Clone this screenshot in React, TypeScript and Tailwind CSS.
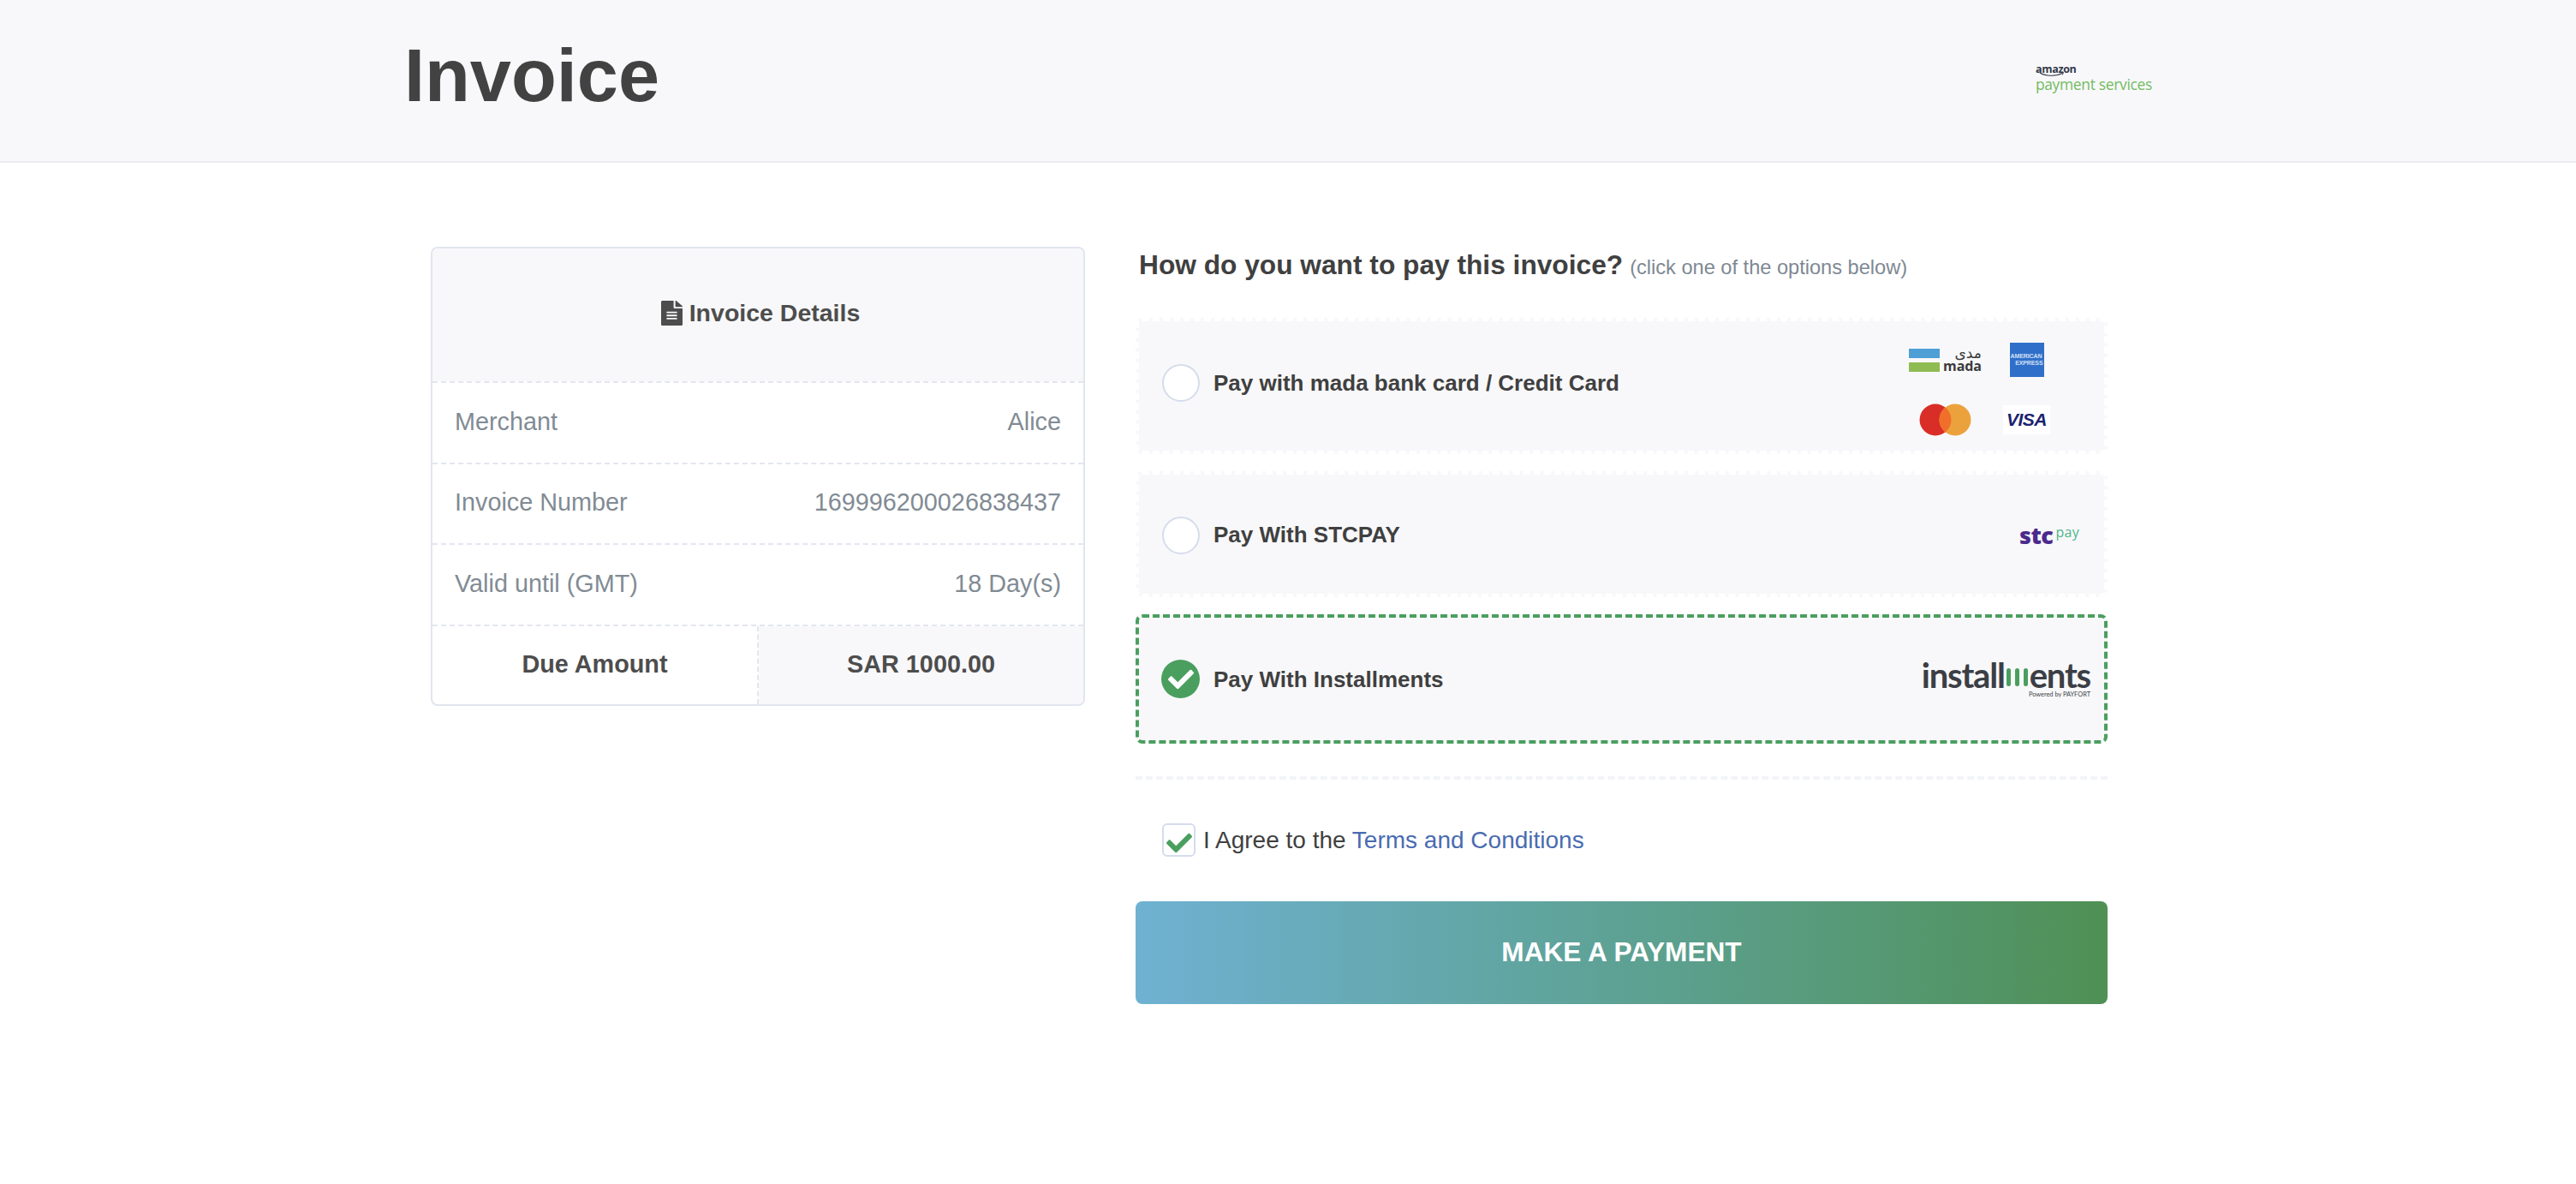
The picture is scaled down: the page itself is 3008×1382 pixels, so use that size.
import { FaFileAlt, FaCheck } from 'react-icons/fa';

const sans = 'font-["Liberation_Sans",Arial,sans-serif]';

function AmazonLogo() {
  return (
    <div className="flex flex-col items-start mb-[6px]">
      <div className="relative h-[14px] w-[42px]">
        <span className='block font-["Open_Sans",sans-serif] font-bold text-[12.5px] leading-[11px] tracking-[-0.3px] text-[#33384a]'>
          amazon
        </span>
        <svg className="absolute left-[4px] top-[9px]" width="30" height="6" viewBox="0 0 30 6" fill="none">
          <path d="M1 1c7 4.2 19 4.4 26 .6" stroke="#33384a" strokeWidth="1.1" strokeLinecap="round" />
          <path d="M25 .6l3.4-.2-1 3" stroke="#33384a" strokeWidth="1" fill="none" />
        </svg>
      </div>
      <span className='font-["Open_Sans",sans-serif] font-normal text-[17.4px] leading-[18px] tracking-[-0.3px] text-[#74bb63] whitespace-nowrap'>
        payment services
      </span>
    </div>
  );
}

function MadaLogo() {
  return (
    <div className="flex items-center gap-[4px]">
      <div className="flex flex-col gap-[5px]">
        <div className="w-[36px] h-[11px] bg-[#4d9fd6]" />
        <div className="w-[36px] h-[11px] bg-[#8fbc52]" />
      </div>
      <div className="flex flex-col items-end">
        <span className='font-["DejaVu_Sans",sans-serif] text-[17px] leading-[15px] text-[#3a3a3a]' dir="rtl">
          مدى
        </span>
        <span className='font-["Open_Sans",sans-serif] font-bold text-[16px] leading-[15px] tracking-[-0.1px] text-[#3a3a3a]'>
          mada
        </span>
      </div>
    </div>
  );
}

function AmexLogo() {
  return (
    <div className={`w-[40px] h-[40px] bg-[#306fc9] flex flex-col justify-center ${sans} font-bold text-[7px] leading-[8px] text-[#cfe0f7] overflow-hidden`}>
      <span className="whitespace-nowrap pl-[1px] tracking-[-0.1px]">AMERICAN</span>
      <span className="whitespace-nowrap text-right pr-[1px] tracking-[-0.1px]">EXPRESS</span>
    </div>
  );
}

function MasterCardLogo() {
  return (
    <svg width="62" height="38" viewBox="0 0 62 38">
      <circle cx="19" cy="19" r="18.5" fill="#d92d27" />
      <circle cx="42" cy="19" r="18.5" fill="#eca23c" />
      <path d="M30.5 4.5a18.5 18.5 0 0 1 0 29a18.5 18.5 0 0 1 0-29z" fill="#f06f2b" />
    </svg>
  );
}

function VisaLogo() {
  return (
    <div className={`w-[55px] h-[34px] bg-white flex items-center justify-center ${sans} italic font-bold text-[21px] tracking-[-0.5px] text-[#1a2270]`}>
      VISA
    </div>
  );
}

function StcLogo() {
  return (
    <div className='flex items-start font-["Open_Sans",sans-serif]'>
      <span className="font-extrabold text-[27px] leading-[24px] tracking-[-0.5px] text-[#4b2a8c]">stc</span>
      <span className="ml-[3px] font-normal text-[16px] leading-[16px] tracking-[0.3px] text-[#4fb58c]">pay</span>
    </div>
  );
}

function InstallmentsLogo() {
  return (
    <div className='flex flex-col items-end font-["Lato",sans-serif] text-[#3b3f45] mt-[2px]'>
      <div className="flex items-end h-[34px]">
        <span className="font-bold text-[40px] leading-[34px] tracking-[-1.2px]">install</span>
        <span className="flex items-end gap-[5px] mx-[2px] mb-[4px]">
          <span className="w-[5px] h-[21px] rounded-full bg-[#4a9f5f]" />
          <span className="w-[5px] h-[21px] rounded-full bg-[#4a9f5f]" />
          <span className="w-[5px] h-[21px] rounded-full bg-[#4a9f5f]" />
        </span>
        <span className="font-bold text-[40px] leading-[34px] tracking-[-1.2px]">ents</span>
      </div>
      <span className="text-[7.4px] leading-[10px] mt-[1px] whitespace-nowrap">Powered by PAYFORT</span>
    </div>
  );
}

function InfoRow({ label, value }: { label: string; value: string }) {
  return (
    <div className="h-[94.5px] flex items-center justify-between px-[26px] pb-[2px] border-t-2 border-dashed border-[#e3e6f1] text-[#818b94] text-[28.8px]">
      <span>{label}</span>
      <span>{value}</span>
    </div>
  );
}

function Radio({ checked }: { checked?: boolean }) {
  if (checked) {
    return (
      <span className="w-[45px] h-[45px] rounded-full bg-[#4a9f5f] flex items-center justify-center text-white shrink-0">
        <FaCheck className="w-[30px] h-[30px]" />
      </span>
    );
  }
  return <span className="w-[44px] h-[44px] rounded-full bg-white border-2 border-[#d5dcec] shrink-0" />;
}

export default function App() {
  return (
    <div className={`min-h-screen bg-white ${sans} text-[#404040]`}>
      <header className="h-[190px] bg-[#f8f8fa] border-b-2 border-[#ececef] pl-[472px] pr-[495px] flex items-center justify-between">
        <h1 className="font-bold text-[86.5px] leading-none text-[#424242] pb-[12px]">Invoice</h1>
        <AmazonLogo />
      </header>

      <main className="flex items-start gap-[59px] pl-[503px] pt-[98px]">
        <section className="w-[764px] border-2 border-[#e1e5ef] rounded-lg overflow-hidden">
          <div className="h-[155px] bg-[#f8f8fa] flex items-center justify-center gap-[8px] text-[#4d4d4d] pb-[4px] pl-[6px]">
            <FaFileAlt className="w-[25px] h-[29px]" preserveAspectRatio="none" />
            <h2 className="font-bold text-[28.5px]">Invoice Details</h2>
          </div>
          <InfoRow label="Merchant" value="Alice" />
          <InfoRow label="Invoice Number" value="169996200026838437" />
          <InfoRow label="Valid until (GMT)" value="18 Day(s)" />
          <div className="flex h-[93px] border-t-2 border-dashed border-[#e3e6f1] font-bold text-[28.8px] text-[#4d4d4d]">
            <div className="flex-1 flex items-center justify-center border-r-2 border-dashed border-[#e3e6f1]">Due Amount</div>
            <div className="flex-1 flex items-center justify-center bg-[#f8f8fa]">SAR 1000.00</div>
          </div>
        </section>

        <section className="w-[1135px] flex flex-col">
          <div className="flex items-baseline pl-[4px] h-[60px] leading-[42px]">
            <h2 className="font-bold text-[31.7px] text-[#404040]">How do you want to pay this invoice?</h2>
            <span className="ml-[8px] text-[23.6px] text-[#7e8893]">(click one of the options below)</span>
          </div>
          <div className="h-[23px]" />

          <div className="h-[159px] border-4 border-dashed border-white bg-[#f8f8fa] rounded-lg flex items-center justify-between pl-[27px] pr-[43px]">
            <div className="flex items-center gap-[16px] pb-[7px]">
              <Radio />
              <span className="font-bold text-[26px]">Pay with mada bank card / Credit Card</span>
            </div>
            <div className="grid grid-cols-[95px_95px] grid-rows-[70px_70px] place-items-center mt-[9px]">
              <MadaLogo />
              <AmexLogo />
              <MasterCardLogo />
              <VisaLogo />
            </div>
          </div>

          <div className="h-[147px] mt-[20px] border-4 border-dashed border-white bg-[#f8f8fa] rounded-lg flex items-center justify-between pl-[27px] pr-[29px] pt-[2px]">
            <div className="flex items-center gap-[16px]">
              <Radio />
              <span className="font-bold text-[26px]">Pay With STCPAY</span>
            </div>
            <StcLogo />
          </div>

          <div className="h-[151px] mt-[20px] border-4 border-dashed border-[#4a9f5f] bg-[#f8f8fa] rounded-lg flex items-center justify-between pl-[26px] pr-[16px]">
            <div className="flex items-center gap-[16px]">
              <Radio checked />
              <span className="font-bold text-[26px] mt-[2px]">Pay With Installments</span>
            </div>
            <InstallmentsLogo />
          </div>

          <div className="mt-[38px] border-t-4 border-dashed border-[#f3f4f8]" />

          <label className="mt-[48px] pl-[31px] flex items-center gap-[9px] text-[28px]">
            <span className="w-[39px] h-[39px] rounded-md bg-white border-2 border-[#d5dcec] flex items-center justify-center text-[#4a9f5f] shrink-0">
              <FaCheck className="w-[30px] h-[30px] mt-[7px]" />
            </span>
            <span className="mt-[2px]">
              I Agree to the <a className="text-[#4a6cb0]">Terms and Conditions</a>
            </span>
          </label>

          <button className="mt-[50px] h-[120px] rounded-lg bg-gradient-to-r from-[#6fb1d2] to-[#4f9054] text-white font-bold text-[31.6px]">
            MAKE A PAYMENT
          </button>
        </section>
      </main>
    </div>
  );
}
